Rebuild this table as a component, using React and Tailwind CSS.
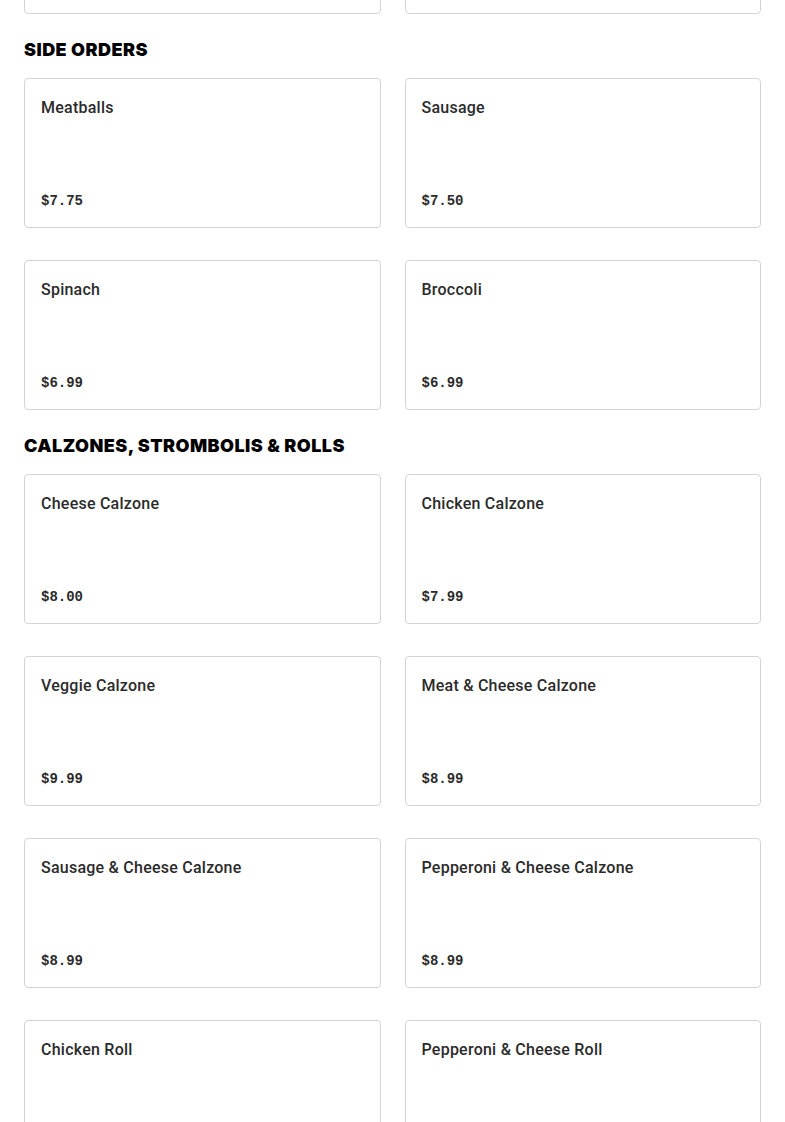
const sections = [
  {
    title: null,
    items: [
      { name: 'Garlic Knots', price: '$5.99' },
      { name: 'French Fries', price: '$4.99' },
    ],
  },
  {
    title: 'Side Orders',
    items: [
      { name: 'Meatballs', price: '$7.75' },
      { name: 'Sausage', price: '$7.50' },
      { name: 'Spinach', price: '$6.99' },
      { name: 'Broccoli', price: '$6.99' },
    ],
  },
  {
    title: 'Calzones, Strombolis & Rolls',
    items: [
      { name: 'Cheese Calzone', price: '$8.00' },
      { name: 'Chicken Calzone', price: '$7.99' },
      { name: 'Veggie Calzone', price: '$9.99' },
      { name: 'Meat & Cheese Calzone', price: '$8.99' },
      { name: 'Sausage & Cheese Calzone', price: '$8.99' },
      { name: 'Pepperoni & Cheese Calzone', price: '$8.99' },
      { name: 'Chicken Roll', price: '$7.99' },
      { name: 'Pepperoni & Cheese Roll', price: '$7.99' },
    ],
  },
];

function MenuCard({ item }) {
  return (
    <div className="h-[150px] border border-[#d4d4d4] rounded-[4px] bg-white px-4 pt-[17px] pb-4 flex flex-col justify-between">
      <div className="text-base leading-6 font-medium tracking-[0.015em] text-[#2b2b2b] font-['Roboto',sans-serif]">{item.name}</div>
      <div className="text-sm leading-5 font-bold text-[#2b2b2b] font-['Liberation_Mono',monospace]">{item.price}</div>
    </div>
  );
}

export default function App() {
  return (
    <div className="min-h-screen bg-white px-6 overflow-hidden">
      <div className="-mt-[136px]">
        {sections.map((section, i) => (
          <section key={i}>
            {section.title && (
              <h2 className="mt-[22px] mb-[14px] text-lg leading-7 font-black uppercase tracking-[0.025em] text-black font-['Inter',sans-serif]">
                {section.title}
              </h2>
            )}
            <div className="grid grid-cols-2 gap-x-6 gap-y-8">
              {section.items.map((item) => (
                <MenuCard key={item.name} item={item} />
              ))}
            </div>
          </section>
        ))}
      </div>
    </div>
  );
}
